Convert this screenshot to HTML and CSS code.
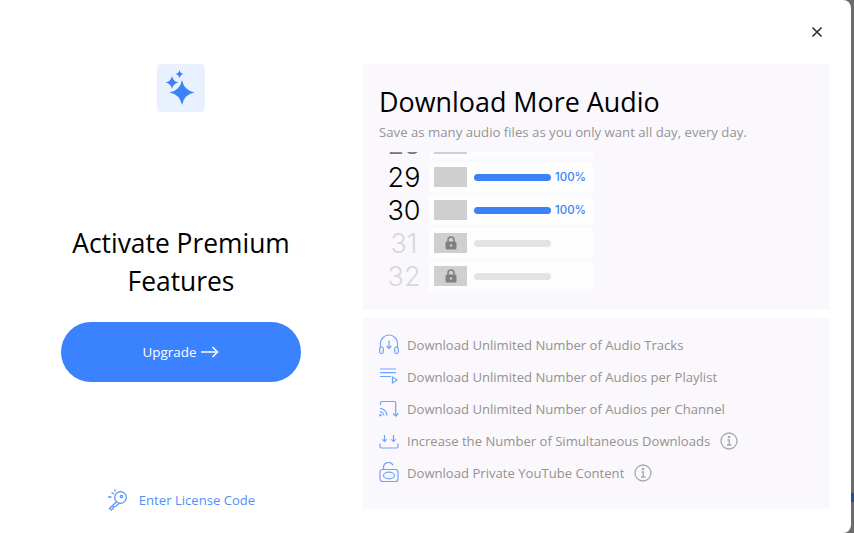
FILE: index.html
```html
<!DOCTYPE html>
<html lang="en">
<head>
    <meta charset="UTF-8">
    <meta name="viewport" content="width=device-width, initial-scale=1.0">
    <title>Activate Premium Features</title>
    <link rel="stylesheet" href="styles.css">
</head>
<body>
    <div class="backdrop-accent"></div>
    <div class="dialog">
        <button class="close-btn" aria-label="Close">
            <svg width="12" height="12" viewBox="0 0 12 12"><path d="M1.500 1.500l9 9M10.500 1.500l-9 9" stroke="#333" stroke-width="1.700" fill="none"/></svg>
        </button>

        <div class="left-col">
            <div class="logo-box">
                <svg width="48" height="48" viewBox="0 0 48 48" fill="#3b82f6">
                    <path d="M25 16Q27 26.500 37.500 28.500Q27 30.500 25 41Q23 30.500 12.500 28.500Q23 26.500 25 16z"/>
                    <path d="M15 12Q16 17.500 21.500 18.500Q16 19.500 15 25Q14 19.500 8.500 18.500Q14 17.500 15 12z"/>
                    <path d="M22.500 6Q23.200 9.300 26.500 10Q23.200 10.700 22.500 14.500Q21.800 10.700 18.500 10Q21.800 9.300 22.500 6z"/>
                </svg>
            </div>
            <h1 class="promo-title">Activate Premium Features</h1>
            <button class="upgrade-btn">Upgrade
                <svg width="18" height="12" viewBox="0 0 18 12"><path d="M0 6h16.500M11.500 1l5 5-5 5" stroke="#fff" stroke-width="1.500" fill="none"/></svg>
            </button>
            <a class="license-link" href="#">
                <svg width="22" height="22" viewBox="0 0 22 22" fill="none" stroke="#5b97fb" stroke-width="1.300">
                    <circle cx="13.500" cy="8.500" r="5.800"/>
                    <circle cx="14.500" cy="7.500" r="1.200"/>
                    <path d="M9.500 12.800l-7 6.700 2 1.500 1.800-1.500v-1.800h1.900l4.500-3.700"/>
                    <path d="M4.500 3.500l2.500 1.500M1 8h3.500M7.500 .500l1 2"/>
                </svg>
                Enter License Code
            </a>
        </div>

        <div class="right-col">
            <div class="preview-panel">
                <h2 class="preview-title">Download More Audio</h2>
                <p class="preview-sub">Save as many audio files as you only want all day, every day.</p>
                <div class="track-list">
                    <div class="track-row cut-row">
                        <span class="track-num">28</span>
                        <div class="track-card"><div class="thumb"></div></div>
                    </div>
                    <div class="track-row">
                        <span class="track-num">29</span>
                        <div class="track-card"><div class="thumb"></div><div class="bar done"></div><span class="pct">100%</span></div>
                    </div>
                    <div class="track-row">
                        <span class="track-num">30</span>
                        <div class="track-card"><div class="thumb"></div><div class="bar done"></div><span class="pct">100%</span></div>
                    </div>
                    <div class="track-row locked">
                        <span class="track-num">31</span>
                        <div class="track-card">
                            <div class="thumb">
                                <svg width="12" height="14" viewBox="0 0 12 14"><path d="M3 6V4a3 3 0 0 1 6 0v2" fill="none" stroke="#808080" stroke-width="1.500"/><rect x="0.500" y="5.500" width="11" height="8" rx="1.500" fill="#808080"/><circle cx="6" cy="9.500" r="1.200" fill="#ccc"/></svg>
                            </div>
                            <div class="bar"></div>
                        </div>
                    </div>
                    <div class="track-row locked">
                        <span class="track-num">32</span>
                        <div class="track-card">
                            <div class="thumb">
                                <svg width="12" height="14" viewBox="0 0 12 14"><path d="M3 6V4a3 3 0 0 1 6 0v2" fill="none" stroke="#808080" stroke-width="1.500"/><rect x="0.500" y="5.500" width="11" height="8" rx="1.500" fill="#808080"/><circle cx="6" cy="9.500" r="1.200" fill="#ccc"/></svg>
                            </div>
                            <div class="bar"></div>
                        </div>
                    </div>
                </div>
            </div>

            <ul class="feature-panel">
                <li class="feature">
                    <svg class="feature-icon" width="22" height="22" viewBox="0 0 22 22" fill="none" stroke="#6ea2fb" stroke-width="1.200">
                        <path d="M1.500 14v-4.500a8.500 8.500 0 0 1 17 0V14"/>
                        <rect x=".700" y="13" width="3.600" height="6.500" rx="1.800"/>
                        <rect x="15.700" y="13" width="3.600" height="6.500" rx="1.800"/>
                        <path d="M10 6.500v8M7.500 12l2.500 2.500 2.500-2.500"/>
                    </svg>
                    Download Unlimited Number of Audio Tracks
                </li>
                <li class="feature">
                    <svg class="feature-icon" width="22" height="22" viewBox="0 0 22 22" fill="none" stroke="#6ea2fb" stroke-width="1.200">
                        <path d="M1 3h16M1 6.700h16M1 10.500h11"/>
                        <path d="M13.500 11v6l4.500-3z"/>
                    </svg>
                    Download Unlimited Number of Audios per Playlist
                </li>
                <li class="feature">
                    <svg class="feature-icon" width="22" height="22" viewBox="0 0 22 22" fill="none" stroke="#6ea2fb" stroke-width="1.200">
                        <path d="M1.500 7V5A1.500 1.500 0 0 1 3 3.500h12.200a1.500 1.500 0 0 1 1.500 1.500v13"/>
                        <path d="M14 15.500l2.700 2.700 2.700-2.700"/>
                        <path d="M1 10.500a7 7 0 0 1 7 7M1 13.800a3.800 3.800 0 0 1 3.800 3.800"/>
                        <circle cx="1.500" cy="17.200" r=".7" fill="#6ea2fb"/>
                    </svg>
                    Download Unlimited Number of Audios per Channel
                </li>
                <li class="feature">
                    <svg class="feature-icon" width="22" height="22" viewBox="0 0 22 22" fill="none" stroke="#6ea2fb" stroke-width="1.200">
                        <path d="M5.500 5v6.500M3.300 9.300l2.200 2.200 2.200-2.200M14.500 5v6.500M12.300 9.300l2.200 2.200 2.200-2.200"/>
                        <path d="M1 13.500v3A1.500 1.500 0 0 0 2.500 18h15a1.500 1.500 0 0 0 1.500-1.500v-3"/>
                    </svg>
                    Increase the Number of Simultaneous Downloads
                    <svg class="info-icon" width="18" height="18" viewBox="0 0 18 18" fill="none" stroke="#a8a8a8" stroke-width="1.300"><circle cx="9" cy="9" r="8"/><path d="M7.500 8h1.700v5M7 13h4.500"/><circle cx="9" cy="5" r=".6" fill="#a8a8a8"/></svg>
                </li>
                <li class="feature">
                    <svg class="feature-icon" width="22" height="22" viewBox="0 0 22 22" fill="none" stroke="#6ea2fb" stroke-width="1.200">
                        <path d="M4.500 7V5.500a5 5 0 0 1 9.500-2.200"/>
                        <rect x="1" y="7.500" width="18" height="12" rx="2.500"/>
                        <ellipse cx="10" cy="13.500" rx="5.500" ry="3.300"/>
                    </svg>
                    Download Private YouTube Content
                    <svg class="info-icon" width="18" height="18" viewBox="0 0 18 18" fill="none" stroke="#a8a8a8" stroke-width="1.300"><circle cx="9" cy="9" r="8"/><path d="M7.500 8h1.700v5M7 13h4.500"/><circle cx="9" cy="5" r=".6" fill="#a8a8a8"/></svg>
                </li>
            </ul>
        </div>
    </div>
</body>
</html>
```

FILE: styles.css
```css
body {
    margin: 0;
    height: 533px;
    overflow: hidden;
    background-color: #6b6b6b;
    font-family: "Open Sans", "Noto Sans", sans-serif;
}
.backdrop-accent {
    position: absolute;
    top: 493px;
    right: 0;
    width: 3px;
    height: 9px;
    background-color: #2b4c8c;
}
.dialog {
    position: relative;
    width: 851px;
    height: 533px;
    background-color: white;
    border-radius: 0 8px 8px 0;
    display: flex;
    box-sizing: border-box;
    padding: 64px 21px 24px 61px;
}
.close-btn {
    position: absolute;
    top: 26px;
    right: 28px;
    padding: 0;
    border: none;
    background: none;
    display: flex;
}

/* left side */
.left-col {
    width: 240px;
    height: 460px;
    margin-right: 62px;
    display: flex;
    flex-direction: column;
    align-items: center;
}
.logo-box {
    width: 48px;
    height: 48px;
    border-radius: 4px;
    background-color: #e9f1fe;
    display: flex;
}
.promo-title {
    margin: 112px 0 0;
    font-size: 26.400px;
    font-weight: 400;
    line-height: 38px;
    text-align: center;
    color: black;
}
.upgrade-btn {
    flex-shrink: 0;
    margin-top: 22px;
    width: 240px;
    height: 60px;
    border: none;
    border-radius: 30px;
    background-color: #3b82ff;
    color: white;
    font-family: inherit;
    font-size: 13.400px;
    display: flex;
    align-items: center;
    justify-content: center;
    gap: 5px;
}
.license-link {
    margin-top: 107px;
    display: flex;
    align-items: center;
    gap: 10px;
    color: #4f8ffb;
    font-size: 13.100px;
    text-decoration: none;
}

/* right side */
.right-col {
    flex: 1;
    display: flex;
    flex-direction: column;
    gap: 8px;
}
.preview-panel {
    height: 246px;
    box-sizing: border-box;
    padding: 20px 16px 0;
    background-color: #faf8fc;
    overflow: hidden;
}
.preview-title {
    margin: 0;
    font-size: 26.900px;
    font-weight: 400;
    line-height: 36px;
    color: black;
}
.preview-sub {
    margin: 2px 0 0;
    font-size: 13.200px;
    line-height: 20px;
    color: #969494;
}
.track-list {
    height: 139px;
    width: 214px;
    margin-top: 10px;
    overflow: hidden;
    display: flex;
    flex-direction: column;
    justify-content: flex-end;
    gap: 3px;
}
.track-row {
    display: flex;
    align-items: center;
    height: 30px;
    flex-shrink: 0;
}
.track-num {
    width: 50px;
    text-align: center;
    font-family: "Inter", sans-serif;
    font-size: 27px;
    font-weight: 300;
    color: black;
}
.locked .track-num {
    color: #d8d8d8;
}
.cut-row .track-num {
    color: #777;
}
.track-card {
    width: 164px;
    height: 30px;
    background-color: #fdfdfe;
    display: flex;
    align-items: center;
    padding-left: 5px;
    box-sizing: border-box;
}
.thumb {
    width: 33px;
    height: 20px;
    background-color: #cfcfcf;
    margin-right: 7px;
    display: flex;
    align-items: center;
    justify-content: center;
}
.bar {
    width: 77px;
    height: 7px;
    border-radius: 4px;
    background-color: #e3e3e3;
}
.bar.done {
    background-color: #3b82f6;
}
.pct {
    margin-left: 4px;
    font-family: "Inter", sans-serif;
    font-size: 11.500px;
    font-weight: 500;
    color: #3b82f6;
}

/* feature list */
.feature-panel {
    flex: 1;
    margin: 0;
    list-style: none;
    padding: 11px 16px 0;
    background-color: #faf8fc;
}
.feature {
    height: 32px;
    display: flex;
    align-items: center;
    font-size: 13.100px;
    color: #97918c;
}
.feature-icon {
    margin-right: 6px;
}
.info-icon {
    margin-left: 10px;
}
```
